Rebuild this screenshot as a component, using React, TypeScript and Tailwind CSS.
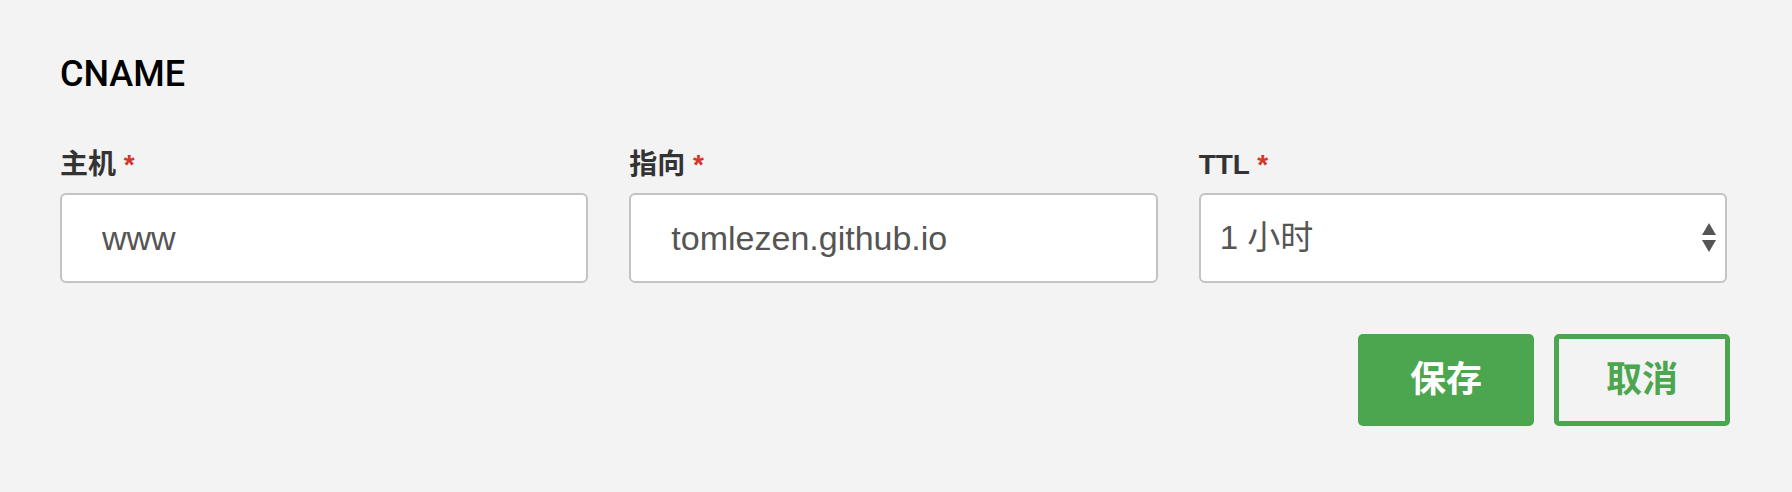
import React from "react";

const latin = { fontFamily: '"Liberation Sans", "Noto Sans CJK SC", sans-serif' };
const heading = { fontFamily: 'Roboto, "Noto Sans CJK SC", sans-serif' };

function Label({ text }: { text: string }) {
  return (
    <div className="h-[32px] text-[28px] leading-[32px] font-bold text-[#333333] whitespace-nowrap">
      {text}
      <span className="text-[#d6352a]"> *</span>
    </div>
  );
}

function TextField({ value }: { value: string }) {
  return (
    <input
      readOnly
      defaultValue={value}
      style={latin}
      className="w-full h-[90px] rounded-[6px] border-2 border-[#c3c3c3] bg-white pl-[40px] pr-4 text-[34px] text-[#555555] outline-none"
    />
  );
}

function TtlSelect() {
  return (
    <div className="relative w-full h-[90px] rounded-[6px] border-2 border-[#c3c3c3] bg-white flex items-center pl-[19px]">
      <span className="text-[33px] leading-[40px] text-[#555555]">1 小时</span>
      <svg
        className="absolute right-[8px] top-1/2 -translate-y-1/2"
        width="16"
        height="32"
        viewBox="0 0 16 32"
      >
        <polygon points="8,1 15,13 1,13" fill="#555555" />
        <polygon points="1,18 15,18 8,30" fill="#555555" />
      </svg>
    </div>
  );
}

export default function App() {
  return (
    <div
      style={latin}
      className="w-[1792px] h-[492px] bg-[#f3f3f3] pt-[54px] pl-[60px] pr-[65px]"
    >
      <h2 style={heading} className="text-[36px] leading-[40px] font-medium text-black">
        CNAME
      </h2>

      <div className="mt-[55px] grid grid-cols-3 gap-x-[41px]">
        <div className="flex flex-col gap-[12px]">
          <Label text="主机" />
          <TextField value="www" />
        </div>
        <div className="flex flex-col gap-[12px]">
          <Label text="指向" />
          <TextField value="tomlezen.github.io" />
        </div>
        <div className="flex flex-col gap-[12px]">
          <Label text="TTL" />
          <TtlSelect />
        </div>
      </div>

      <div className="mt-[51px] -mr-[3px] flex justify-end gap-[20px]">
        <button className="w-[176px] h-[92px] rounded-[5px] bg-[#4ca54f] text-white text-[36px] font-bold">
          保存
        </button>
        <button className="w-[176px] h-[92px] rounded-[5px] border-[5px] border-[#4ca54f] bg-transparent text-[#4ca54f] text-[36px] font-bold">
          取消
        </button>
      </div>
    </div>
  );
}
